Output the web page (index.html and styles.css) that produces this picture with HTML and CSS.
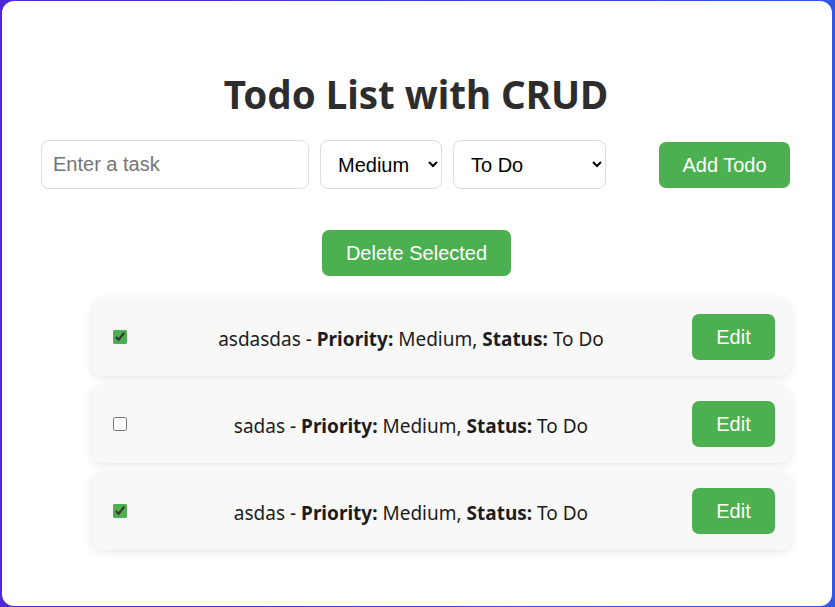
FILE: index.html
```html
<!DOCTYPE html>
<html lang="en">
<head>
<meta charset="utf-8">
<title>Todo List with CRUD</title>
<link rel="stylesheet" href="styles.css">
</head>
<body>
  <div class="app">
    <h1 class="title">Todo List with CRUD</h1>
    <div class="form-row">
      <input class="task-input" type="text" placeholder="Enter a task">
      <select class="select select-priority">
        <option>Low</option>
        <option selected>Medium</option>
        <option>High</option>
      </select>
      <select class="select select-status">
        <option selected>To Do</option>
        <option>In Progress</option>
        <option>Done</option>
      </select>
      <button class="btn btn-add">Add Todo</button>
    </div>
    <div class="delete-row">
      <button class="btn btn-delete">Delete Selected</button>
    </div>
    <ul class="todo-list">
      <li class="todo-item">
        <input class="todo-check" type="checkbox" checked>
        <span class="todo-text">asdasdas - <strong>Priority:</strong> Medium, <strong>Status:</strong> To Do</span>
        <button class="btn btn-edit">Edit</button>
      </li>
      <li class="todo-item">
        <input class="todo-check" type="checkbox">
        <span class="todo-text">sadas - <strong>Priority:</strong> Medium, <strong>Status:</strong> To Do</span>
        <button class="btn btn-edit">Edit</button>
      </li>
      <li class="todo-item">
        <input class="todo-check" type="checkbox" checked>
        <span class="todo-text">asdas - <strong>Priority:</strong> Medium, <strong>Status:</strong> To Do</span>
        <button class="btn btn-edit">Edit</button>
      </li>
    </ul>
  </div>
</body>
</html>
```

FILE: styles.css
```css
* { box-sizing: border-box; }

html, body { height: 100%; }

body {
  margin: 0;
  padding: 1px 3px 1px 2px;
  background: linear-gradient(to right, #4f28d5, #3357e1);
  font-family: "Noto Sans", "Open Sans", sans-serif;
}

.app {
  background: #fff;
  border-radius: 12px;
  min-height: 100%;
  padding: 69px 41px 20px 39px;
}

.title {
  margin: 0 0 22px;
  text-align: center;
  font-size: 38.5px;
  line-height: 48px;
  font-weight: 700;
  color: #2d2d2d;
}

.form-row {
  display: flex;
  align-items: center;
}

.task-input,
.select {
  height: 49px;
  border: 1px solid #ddd;
  border-radius: 8px;
  font-family: "Liberation Sans", Arial, sans-serif;
  font-size: 20px;
  background: #fff;
  color: #000;
}

.task-input {
  width: 268px;
  padding: 0 11px;
}

.task-input::placeholder { color: #757575; }

.select {
  padding: 0 6px 0 13px;
  margin-left: 11px;
}

.select-priority { width: 122px; }
.select-status { width: 153px; }

.btn {
  border: none;
  border-radius: 7px;
  background: #4caf50;
  color: #fff;
  font-family: "Liberation Sans", Arial, sans-serif;
  font-size: 20px;
  line-height: 24px;
  height: 46px;
  padding: 0 24px;
  cursor: pointer;
}

.btn-add {
  margin-left: 53px;
  width: 131px;
  padding: 0;
}

.delete-row {
  display: flex;
  justify-content: center;
  margin-top: 41px;
  padding-left: 1px;
}

.todo-list {
  list-style: none;
  margin: 23px 0 0;
  padding: 0 0 0 51px;
  display: flex;
  flex-direction: column;
  gap: 10px;
}

.todo-item {
  display: flex;
  align-items: center;
  background: #f8f8f8;
  border-radius: 10px;
  box-shadow: 0 2px 10px rgba(0, 0, 0, 0.1);
  padding: 15px 16px 16px 17px;
}

.todo-check {
  width: 14px;
  height: 14px;
  margin: 0 3px 0 4px;
  accent-color: #4caf50;
}

.todo-text {
  flex: 1;
  text-align: center;
  font-size: 19px;
  color: #1c1c1c;
  padding-top: 3px;
}

.btn-edit {
  width: 83px;
  padding: 0;
}

.todo-text strong { font-weight: 700; }
```
